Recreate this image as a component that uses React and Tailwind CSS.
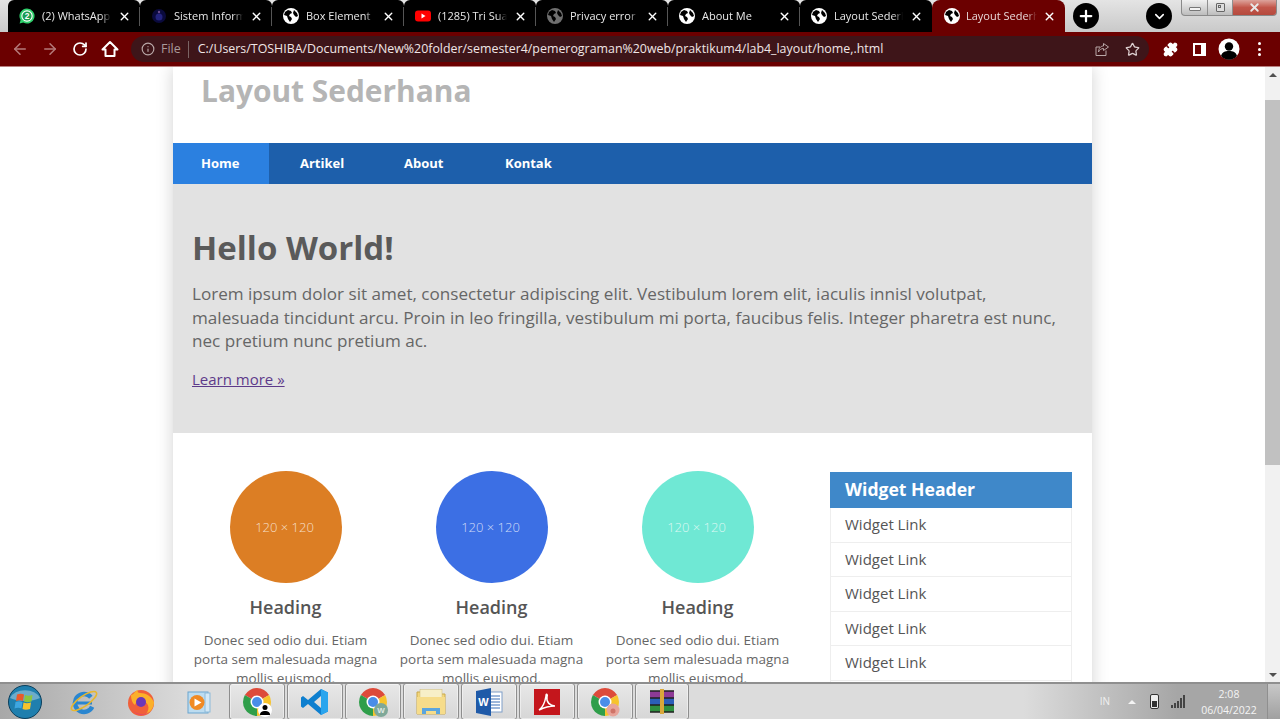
import { ArrowLeft, ArrowRight, RotateCw, Info, Star, Puzzle, X, Plus, ChevronDown } from "lucide-react";

const pageFont = { fontFamily: '"Open Sans", sans-serif' };

function Globe({ dim }) {
  return (
    <svg width="16" height="16" viewBox="0 0 16 16" className="shrink-0">
      <circle cx="8" cy="8" r="8" fill={dim ? "#6f6f6f" : "#ffffff"} />
      <path d="M2 4l3-2 3 1 1 2-2 1-1 2 2 1 1 2-2 3-2-3-1-3-3-1zM11 2l3 3 1 3-2 1-2-2-1-2z" fill="#000000" />
    </svg>
  );
}

function WhatsAppIcon() {
  return (
    <svg width="16" height="16" viewBox="0 0 16 16" className="shrink-0">
      <path d="M8 .5a7.5 7.5 0 0 0-6.4 11.4L.6 15.5l3.7-1A7.5 7.5 0 1 0 8 .5z" fill="#2fd06c" />
      <circle cx="8" cy="8" r="5.7" fill="#ffffff" />
      <circle cx="8" cy="8" r="4.6" fill="#1c9a50" />
      <text x="8" y="11" textAnchor="middle" fontSize="8.500" fontWeight="700" fill="#ffffff" fontFamily="Liberation Sans, sans-serif">2</text>
    </svg>
  );
}

function SistemIcon() {
  return (
    <svg width="16" height="16" viewBox="0 0 16 16" className="shrink-0">
      <circle cx="8" cy="8" r="7" fill="#0a0a3c" />
      <circle cx="8" cy="9" r="3.5" fill="#23237e" />
      <circle cx="8" cy="4" r="1.2" fill="#6a4c8c" />
    </svg>
  );
}

function YoutubeIcon() {
  return (
    <svg width="16" height="16" viewBox="0 0 16 16" className="shrink-0">
      <rect y="2.5" width="16" height="11" rx="3" fill="#ff0000" />
      <path d="M6.5 5.5l4 2.5-4 2.5z" fill="#ffffff" />
    </svg>
  );
}

const tabs = [
  { title: "(2) WhatsApp", icon: <WhatsAppIcon /> },
  { title: "Sistem Informasi", icon: <SistemIcon /> },
  { title: "Box Element", icon: <Globe /> },
  { title: "(1285) Tri Suaka", icon: <YoutubeIcon /> },
  { title: "Privacy error", icon: <Globe dim /> },
  { title: "About Me", icon: <Globe /> },
  { title: "Layout Sederhana", icon: <Globe /> },
];

function Tab({ tab, last }) {
  return (
    <div className="flex h-8 w-[132px] shrink-0 items-center gap-[7px] rounded-t-[6px] bg-black pl-[11px]">
      {tab.icon}
      <span className="flex-1 overflow-hidden whitespace-nowrap text-[11px] text-[#e8e8e8] [mask-image:linear-gradient(to_right,black_85%,transparent)]">
        {tab.title}
      </span>
      <X size={13} strokeWidth={2.6} className="shrink-0 text-white" />
      <div className={`ml-[1px] h-[19px] w-px ${last ? "bg-black" : "bg-[#555555]"}`} />
    </div>
  );
}

function TabStrip() {
  return (
    <div className="relative flex h-8 shrink-0 items-start bg-gradient-to-b from-[#e4e4e4] to-[#c9c9c9] pl-2" style={pageFont}>
      <div className="flex">
        {tabs.map((tab, i) => (
          <Tab key={i} tab={tab} last={i === tabs.length - 1} />
        ))}
      </div>
      <div className="flex h-8 w-[133px] shrink-0 items-center gap-[6px] rounded-t-lg bg-[#6b0000] pl-[12px] pr-[9px]">
        <Globe />
        <span className="flex-1 overflow-hidden whitespace-nowrap text-[11px] text-[#e8d8d8] [mask-image:linear-gradient(to_right,black_85%,transparent)]">
          Layout Sederhana
        </span>
        <X size={13} strokeWidth={2.6} className="shrink-0 text-white" />
      </div>
      <div className="ml-2 mt-[3px] flex h-[26px] w-[26px] items-center justify-center rounded-full bg-black">
        <Plus size={18} strokeWidth={3} className="text-white" />
      </div>
      <div className="ml-[47px] mt-[3px] flex h-[26px] w-[26px] items-center justify-center rounded-full bg-black">
        <ChevronDown size={15} strokeWidth={2.5} className="text-white" />
      </div>
      <div className="ml-[9px] flex h-[16px] w-[96px] overflow-hidden rounded-b-[4px] border border-t-0 border-[#8a8a8a] bg-gradient-to-b from-[#f0f0f0] to-[#bdbdbd]">
        <div className="flex w-[26px] items-end justify-center border-r border-[#8f8f8f] pb-[4px]">
          <div className="h-[4px] w-[12px] rounded-[1px] border border-[#777777] bg-[#f2f2f2]" />
        </div>
        <div className="flex w-[25px] items-center justify-center border-r border-[#8f8f8f]">
          <div className="relative h-[9px] w-[9px] rounded-[1px] border border-[#666666] bg-[#dddddd]">
            <div className="absolute left-[1px] top-[1px] h-[3px] w-[3px] border border-[#666666]" />
          </div>
        </div>
        <div className="flex flex-1 items-center justify-center bg-gradient-to-b from-[#dca39c] via-[#c2564a] to-[#b54a3e]">
          <X size={13} strokeWidth={3.5} className="text-[#e8e8e8]" />
        </div>
      </div>
    </div>
  );
}

function Toolbar() {
  return (
    <div className="flex h-[35px] shrink-0 items-center border-b border-[#b98080] bg-[#6b0000]" style={pageFont}>
      <div className="flex w-[131px] items-center gap-[12px] pl-[11px]">
        <ArrowLeft size={18} className="text-[#b57a7a]" />
        <ArrowRight size={18} className="text-[#b57a7a]" />
        <RotateCw size={16} strokeWidth={2.6} className="ml-[1px] text-white" />
        <svg width="18" height="18" viewBox="0 0 18 18" className="ml-[1px]">
          <path d="M1.500 9.500L9 2l7.500 7.500h-3V16h-9V9.500z" fill="none" stroke="#ffffff" strokeWidth="2" strokeLinejoin="round" />
        </svg>
      </div>
      <div className="flex h-[26px] w-[1018px] items-center rounded-full bg-[#3e1519] pl-[10px] pr-[9px]">
        <Info size={14} className="text-[#b9a8a8]" />
        <span className="ml-[6px] text-[12.5px] text-[#a99a9a]">File</span>
        <div className="ml-[7px] h-[17px] w-px bg-[#7a6464]" />
        <span className="ml-[9px] flex-1 whitespace-nowrap text-[12.4px] text-[#f0e6e6]">
          C:/Users/TOSHIBA/Documents/New%20folder/semester4/pemerograman%20web/praktikum4/lab4_layout/home,.html
        </span>
        <svg width="15" height="15" viewBox="0 0 15 15" className="mr-[15px]">
          <path d="M11 8.500V13.500H1V5h4M8.500 1.500L13.500 5l-5 3.500V6.500C6 6.500 4.500 8 3.500 10c0-3.500 2-6 5-6z" fill="none" stroke="#b9a8a8" strokeWidth="1" />
        </svg>
        <Star size={15} strokeWidth={2} className="text-[#ddd0d0]" />
      </div>
      <Puzzle size={15} fill="#ffffff" className="ml-[14px] text-white" />
      <div className="ml-[15px] flex h-[13px] w-[13px] justify-start border-2 border-white bg-white">
        <div className="h-full w-[6px] bg-[#6b0000]" />
      </div>
      <svg width="22" height="22" viewBox="0 0 22 22" className="ml-[12px]">
        <circle cx="11" cy="11" r="10.500" fill="#ffffff" />
        <circle cx="11" cy="8.500" r="4.200" fill="#000000" />
        <path d="M3 18c1-4 4-5 8-5s7 1 8 5a10.500 10.500 0 0 1-16 0z" fill="#000000" />
      </svg>
      <div className="ml-[18px] flex flex-col gap-[2.5px]">
        <div className="h-[3px] w-[3px] rounded-full bg-white" />
        <div className="h-[3px] w-[3px] rounded-full bg-white" />
        <div className="h-[3px] w-[3px] rounded-full bg-white" />
      </div>
    </div>
  );
}

const navItems = [
  { label: "Home", className: "w-[96px] bg-[#2b80e0] pl-[28px]" },
  { label: "Artikel", className: "w-[104px] pl-[31px]" },
  { label: "About", className: "w-[101px] pl-[31px]" },
  { label: "Kontak", className: "w-[100px] pl-[31px]" },
];

function Card({ color }) {
  return (
    <div className="flex w-[206px] shrink-0 flex-col items-center px-[10px]">
      <div
        className="flex h-[112px] w-[112px] items-center justify-center rounded-full pr-[3px] pt-[1px] text-[13px] font-light text-white/75"
        style={{ backgroundColor: color }}
      >
        120 × 120
      </div>
      <h3 className="mt-[12px] pr-[1px] text-[18px] font-semibold leading-[24px] text-[#555555]">Heading</h3>
      <p className="mt-[12px] pr-[1px] text-center text-[13.5px] leading-[19px] text-[#666666]">
        Donec sed odio dui. Etiam porta sem malesuada magna mollis euismod.
      </p>
    </div>
  );
}

function Page() {
  return (
    <div className="flex-1 overflow-hidden bg-white" style={pageFont}>
      <div className="ml-[173px] h-[800px] w-[919px] bg-white shadow-[0_0_16px_rgba(0,0,0,0.18)]">
        <div className="h-[76px] pl-[28px] pt-[4px]">
          <h1 className="text-[29.9px] font-bold leading-[40px] text-[#b5b5b5]">Layout Sederhana</h1>
        </div>
        <nav className="flex h-[41px] items-center bg-[#1d5fab] text-[13px] font-bold text-white">
          {navItems.map((item) => (
            <div key={item.label} className={`flex h-full items-center ${item.className}`}>
              {item.label}
            </div>
          ))}
        </nav>
        <section className="h-[249px] bg-[#e2e2e2] px-[19px] pt-[43px]">
          <h2 className="text-[33px] font-bold leading-[42px] text-[#5a5a5a]">Hello World!</h2>
          <p className="mt-[13px] text-[17.1px] leading-[23.5px] text-[#666666]">
            Lorem ipsum dolor sit amet, consectetur adipiscing elit. Vestibulum lorem elit, iaculis innisl volutpat,
            malesuada tincidunt arcu. Proin in leo fringilla, vestibulum mi porta, faucibus felis. Integer pharetra est
            nunc, nec pretium nunc pretium ac.
          </p>
          <a className="mt-[16px] block text-[15px] leading-[21px] text-[#5d3a8a] underline">Learn more »</a>
        </section>
        <div className="flex pl-[10px] pt-[38px]">
          <Card color="#dc7e24" />
          <Card color="#3c6fe4" />
          <Card color="#6fe8d4" />
          <aside className="ml-[29px] mt-[1px] w-[242px] shrink-0">
            <div className="flex h-[36px] items-center bg-[#3f88c9] pb-[1px] pl-[15px] text-[17.6px] font-bold text-white">
              Widget Header
            </div>
            {[0, 1, 2, 3, 4, 5].map((i) => (
              <div
                key={i}
                className="flex h-[34.6px] items-center border-x border-b border-[#eeeeee] pb-[1px] pl-[14px] text-[15px] text-[#555555]"
              >
                Widget Link
              </div>
            ))}
          </aside>
        </div>
      </div>
    </div>
  );
}

function Scrollbar() {
  return (
    <div className="relative flex w-[15px] shrink-0 flex-col items-center bg-[#f1f1f1]">
      <div className="mt-[6px] h-0 w-0 border-x-[4px] border-b-[4px] border-x-transparent border-b-[#505050]" />
      <div className="mt-[23px] h-[365px] w-full bg-[#c1c1c1]" />
      <div className="mt-auto mb-[5px] h-0 w-0 border-x-[4px] border-t-[4px] border-x-transparent border-t-[#505050]" />
    </div>
  );
}

function ChromeLogo({ badge }) {
  return (
    <svg width="30" height="30" viewBox="0 0 30 30">
      <path d="M15 15L2.880 8A14 14 0 0 1 27.120 8z" fill="#dd4a3a" />
      <path d="M15 15L27.120 8A14 14 0 0 1 15 29z" fill="#f7c32c" />
      <path d="M15 15L15 29A14 14 0 0 1 2.880 8z" fill="#2f9e4a" />
      <circle cx="15" cy="15" r="6.500" fill="#ffffff" />
      <circle cx="15" cy="15" r="5" fill="#4a8de8" />
      {badge === "user" && (
        <g>
          <circle cx="23" cy="23" r="7" fill="#ffffff" />
          <circle cx="23" cy="20.500" r="2.500" fill="#000000" />
          <path d="M18 28c0-3 2-4 5-4s5 1 5 4z" fill="#000000" />
        </g>
      )}
      {badge === "w" && (
        <g>
          <circle cx="23" cy="23" r="7" fill="#7fa898" />
          <text x="23" y="26" textAnchor="middle" fontSize="8" fontWeight="700" fill="#dfe9e4" fontFamily="Liberation Sans, sans-serif">W</text>
        </g>
      )}
      {badge === "pig" && (
        <g>
          <circle cx="23" cy="23" r="6.500" fill="#e8a49a" />
          <circle cx="23" cy="24" r="2.500" fill="#cf7468" />
        </g>
      )}
    </svg>
  );
}

function PinnedApp({ children, width = "w-[56px]" }) {
  return (
    <div className={`${width} flex h-[37px] shrink-0 items-center justify-center rounded-[3px] border border-[#8e8e8e] bg-gradient-to-b from-[#e8e8e8] to-[#d6d6d6] shadow-[inset_0_0_0_1px_rgba(255,255,255,0.45)]`}>
      {children}
    </div>
  );
}

function Taskbar() {
  return (
    <div className="relative flex h-[37px] shrink-0 items-center border-t-2 border-[#8f8f8f] bg-[linear-gradient(to_right,#a8a8a8,#dcdcdc_15%,#dcdcdc_80%,#a6a6a6_92%)]" style={pageFont}>
      <svg width="36" height="36" viewBox="0 0 36 36" className="ml-[7px] shrink-0">
        <circle cx="18" cy="18" r="16.500" fill="#1f7fae" stroke="#0c3f5c" />
        <path d="M3 14a16 12 0 0 1 30 0c-8 4-22 4-30 0z" fill="#ffffff" opacity="0.35" />
        <path d="M10 10.500c2.500-1 5-1 7 0l-1 6.500c-2-1-4.500-1-7 0z" fill="#ea5a2a" />
        <path d="M18 11c2 1 4.500 1 7.500 0l-1 6.500c-3 1-5.500 1-7.500 0z" fill="#8cc63f" />
        <path d="M8.500 18c2.500-1 5-1 7 0l-1 6.500c-2-1-4.500-1-7 0z" fill="#3ea6e0" />
        <path d="M16.500 18.500c2 1 4.500 1 7.500 0l-1 6.500c-3 1-5.500 1-7.500 0z" fill="#f7c32c" />
      </svg>
      <svg width="30" height="30" viewBox="0 0 30 30" className="ml-[26px] shrink-0">
        <circle cx="15" cy="16" r="9" fill="none" stroke="#2a86d0" strokeWidth="4.500" strokeDasharray="46 11" transform="rotate(25 15 16)" />
        <rect x="7" y="14.500" width="16" height="3" fill="#2a86d0" />
        <ellipse cx="15" cy="14" rx="15" ry="5" transform="rotate(-35 15 14)" fill="none" stroke="#e8b72c" strokeWidth="1.600" />
      </svg>
      <svg width="30" height="30" viewBox="0 0 30 30" className="ml-[27px] shrink-0">
        <circle cx="15" cy="16" r="13" fill="#f0603a" />
        <path d="M5 8c3 0 3-4 7-5-1 2 0 3 2 3 6 0 11 3 14 9 0 5-3 10-8 12 5-6 2-13-5-13-3 0-5 1-6 4-3-2-4-6-4-10z" fill="#fbb02a" />
        <circle cx="15" cy="15" r="5" fill="#6b37b8" />
        <path d="M6 22a11 11 0 0 0 17 3 12 12 0 0 1-17-3z" fill="#e0368a" />
      </svg>
      <svg width="28" height="28" viewBox="0 0 28 28" className="ml-[28px] shrink-0">
        <rect x="4" y="4" width="20" height="21" fill="#bcdcf0" stroke="#6aa5cf" />
        <rect x="21" y="5" width="5" height="19" fill="#d4e8f5" stroke="#8bbad9" />
        <circle cx="13" cy="14.500" r="7.500" fill="#f08a24" />
        <path d="M10.500 10.500l7 4-7 4z" fill="#ffffff" />
      </svg>
      <div className="ml-[17px] flex gap-[2px]">
        <PinnedApp>
          <ChromeLogo badge="user" />
        </PinnedApp>
        <PinnedApp>
          <svg width="30" height="30" viewBox="0 0 30 30">
            <path d="M21 2l7 3.500v19L21 28 8 17l-5 4-2-1.500V10.500L3 9l5 4zM21 9l-7 6 7 6z" fill="#0e7fcf" fillRule="evenodd" />
            <path d="M21 2l7 3.500v19L21 28z" fill="#2aa5ee" />
          </svg>
        </PinnedApp>
        <PinnedApp>
          <ChromeLogo badge="w" />
        </PinnedApp>
        <PinnedApp>
          <svg width="32" height="28" viewBox="0 0 32 28">
            <path d="M2 4h10l2 2h16v20H2z" fill="#f3d77c" stroke="#c9a84a" />
            <rect x="5" y="1.500" width="22" height="8" fill="#f7efc8" stroke="#cdbb7a" strokeWidth="0.500" />
            <rect x="2" y="9" width="28" height="17" fill="#f6dc8a" />
            <path d="M7 26v-6h18v6h-4v-3H11v3z" fill="#5ba5de" />
          </svg>
        </PinnedApp>
        <PinnedApp>
          <svg width="30" height="30" viewBox="0 0 30 30">
            <rect x="13" y="5" width="15" height="20" fill="#ffffff" stroke="#7f9ec8" />
            <path d="M16 9h10M16 12h10M16 15h10M16 18h10M16 21h10" stroke="#3a6fb5" strokeWidth="1.200" />
            <path d="M2 4l15-3v28L2 26z" fill="#1f5aa8" />
            <text x="9.500" y="19" textAnchor="middle" fontSize="11" fontWeight="700" fill="#ffffff" fontFamily="Liberation Sans, sans-serif">W</text>
          </svg>
        </PinnedApp>
        <PinnedApp>
          <svg width="28" height="28" viewBox="0 0 28 28">
            <rect x="1" y="1" width="26" height="26" fill="#c4161c" />
            <path d="M6 22c3-2 6-8 7-14 0-3 2-2 1 1-1 5 3 9 8 9-5 0-10 1-16 4z" fill="none" stroke="#ffffff" strokeWidth="1.500" />
          </svg>
        </PinnedApp>
        <PinnedApp>
          <ChromeLogo badge="pig" />
        </PinnedApp>
        <PinnedApp width="w-[54px]">
          <svg width="30" height="28" viewBox="0 0 30 28">
            <rect x="3" y="3" width="24" height="7" fill="#8e3a96" />
            <rect x="3" y="10" width="24" height="7" fill="#2b5fb8" />
            <rect x="3" y="17" width="24" height="7" fill="#2f8f3f" />
            <path d="M3 3h24M3 10h24M3 17h24M3 24h24" stroke="#222222" strokeWidth="1.500" />
            <rect x="13" y="1" width="4" height="25" fill="#d9a83a" />
          </svg>
        </PinnedApp>
      </div>
      <div className="ml-auto flex items-center">
        <span className="text-[10px] text-[#f0f0f0]">IN</span>
        <div className="ml-[18px] h-0 w-0 border-x-[4px] border-b-[4px] border-x-transparent border-b-[#f4f4f4]" />
        <div className="ml-[14px] flex h-[15px] w-[9px] items-end rounded-[2px] border border-[#333333] bg-[#eeeeee] p-[1px]">
          <div className="h-[6px] w-full bg-[#333333]" />
        </div>
        <div className="ml-[12px] flex h-[13px] items-end gap-[1px]">
          <div className="h-[3px] w-[2px] bg-[#444444]" />
          <div className="h-[5px] w-[2px] bg-[#444444]" />
          <div className="h-[7px] w-[2px] bg-[#444444]" />
          <div className="h-[10px] w-[2px] bg-[#444444]" />
          <div className="h-[13px] w-[2px] bg-[#444444]" />
        </div>
        <div className="ml-[15px] flex w-[58px] flex-col items-center text-[10.5px] leading-[16px] text-[#f4f4f4]">
          <span>2:08</span>
          <span>06/04/2022</span>
        </div>
        <div className="ml-[9px] h-[35px] w-[13px] border-l border-[#8f8f8f] bg-gradient-to-b from-[#c8c8c8] to-[#a0a0a0]" />
      </div>
    </div>
  );
}

export default function App() {
  return (
    <div className="flex h-[719px] w-[1280px] flex-col overflow-hidden bg-white">
      <TabStrip />
      <Toolbar />
      <div className="flex min-h-0 flex-1">
        <Page />
        <Scrollbar />
      </div>
      <Taskbar />
    </div>
  );
}
